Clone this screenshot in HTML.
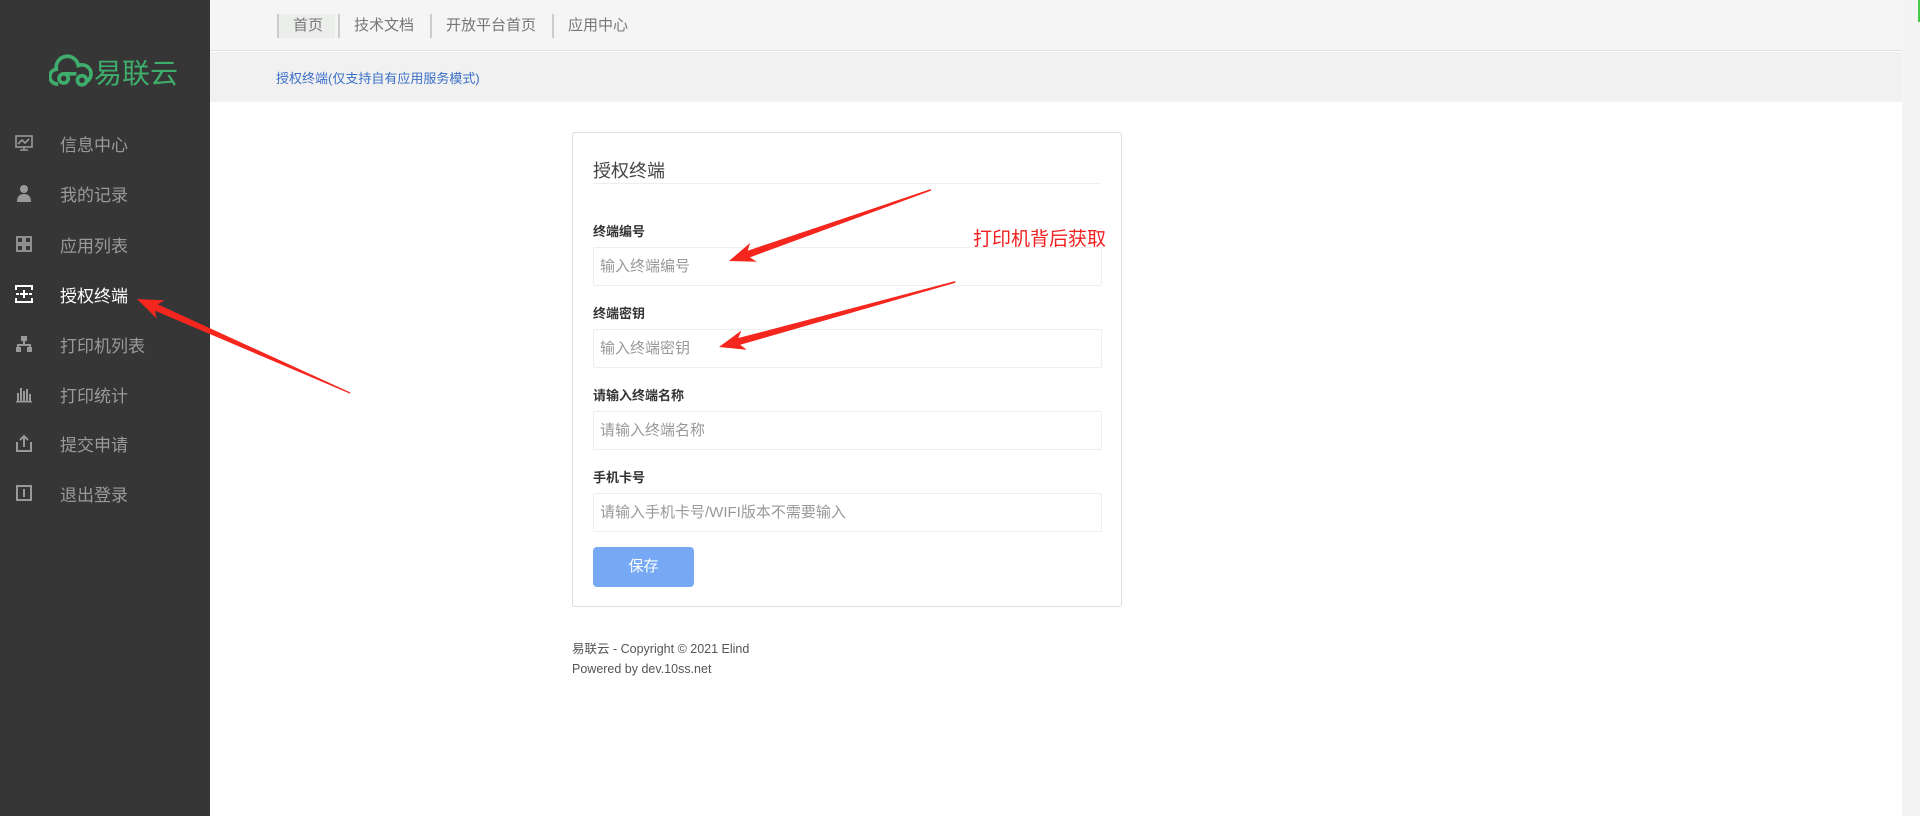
<!DOCTYPE html>
<html><head><meta charset="utf-8"><style>
*{margin:0;padding:0;box-sizing:border-box}
body{width:1920px;height:816px;overflow:hidden;background:#fff;font-family:"Liberation Sans","Noto Sans CJK SC",sans-serif;position:relative}
.side{position:absolute;left:0;top:0;width:210px;height:816px;background:#363636}
.logo{position:absolute;left:49px;top:52px;color:#3fae6c;font-size:28px;display:flex;align-items:center;gap:1px}
.mi{position:absolute;left:0;width:210px;height:40px;display:flex;align-items:center;color:#9a9a9a;font-size:17px}
.mi svg{position:absolute;left:15px;width:18px;height:18px}
.mi span{position:absolute;left:60px}
.mi.act{color:#fff}
.top{position:absolute;left:210px;top:0;right:18px;height:51px;background:#f4f5f4;border-bottom:1px solid #e2e3e2}
.nav{position:absolute;top:14px;height:24px;font-size:15px;color:#777;border-left:2px solid #ccc;padding-left:14px;line-height:24px}
.crumb{position:absolute;left:210px;top:52px;right:18px;height:50px;background:#f0f1f0}
.crumb span{position:absolute;left:66px;top:16px;font-size:13px;color:#3c6fc7}
.card{position:absolute;left:572px;top:132px;width:550px;height:475px;border:1px solid #ddd;border-radius:3px;background:#fff}
.ttl{position:absolute;left:20px;top:24px;font-size:18px;color:#444}
.hr{position:absolute;left:20px;right:20px;top:50px;border-top:1px solid #eee}
.lb{position:absolute;left:20px;font-size:13px;font-weight:bold;color:#333}
.in{position:absolute;left:20px;width:509px;height:39px;border:1px solid #eee;border-radius:2px;font-size:15px;color:#999;padding-left:6px;line-height:37px}
.btn{position:absolute;left:20px;top:414px;width:101px;height:40px;background:#77a8f4;border-radius:4px;color:#fff;font-size:15px;text-align:center;line-height:40px}
.foot{position:absolute;left:572px;top:639px;font-size:12.5px;color:#555;line-height:20px}
.scroll{position:absolute;right:0;top:0;width:18px;height:816px;background:#f4f4f4}
</style></head><body>
<div class="side">
 <div class="logo"><svg width="44" height="36" viewBox="0 0 48 38" fill="none" stroke="#3fae6c" stroke-width="4"><path d="M10 32 A8 8 0 0 1 8 16 A12 12 0 0 1 32 12 A9 9 0 0 1 40 30"/><circle cx="16" cy="26" r="5"/><circle cx="36" cy="28" r="5"/><path d="M16 21 L30 21"/></svg><span>易联云</span></div>
 <div class="mi" style="top:123px"><svg viewBox="0 0 18 18" fill="none" stroke="#999" stroke-width="1.6"><rect x="1" y="2" width="16" height="11"/><path d="M3 10l4-4 3 3 4-4M9 13v3M5 16h8"/></svg><span>信息中心</span></div>
 <div class="mi" style="top:173px"><svg viewBox="0 0 18 18" fill="#999"><circle cx="9" cy="5" r="4"/><path d="M2 18c0-6 3-8 7-8s7 2 7 8z"/></svg><span>我的记录</span></div>
 <div class="mi" style="top:224px"><svg viewBox="0 0 18 18" fill="none" stroke="#999" stroke-width="1.8"><rect x="2" y="2" width="6" height="6"/><rect x="10" y="2" width="6" height="6"/><rect x="2" y="10" width="6" height="6"/><rect x="10" y="10" width="6" height="6"/></svg><span>应用列表</span></div>
 <div class="mi act" style="top:274px"><svg viewBox="0 0 18 18" fill="none" stroke="#fff" stroke-width="2"><path d="M1 5V1h16v4M1 13v4h16v-4M1 9h3M14 9h3M9 5v8M5 9h8"/></svg><span>授权终端</span></div>
 <div class="mi" style="top:324px"><svg viewBox="0 0 18 18" fill="#999"><rect x="6" y="1" width="6" height="5"/><rect x="1" y="12" width="5" height="5"/><rect x="12" y="12" width="5" height="5"/><path d="M8 6h2v3h6v3h-2v-1H4v1H2V9h6z"/></svg><span>打印机列表</span></div>
 <div class="mi" style="top:374px"><svg viewBox="0 0 18 18" fill="#999"><rect x="2" y="8" width="2" height="8"/><rect x="5" y="3" width="2" height="13"/><rect x="8" y="6" width="2" height="10"/><rect x="11" y="4" width="2" height="12"/><rect x="14" y="9" width="2" height="7"/><rect x="1" y="16" width="16" height="1.5"/></svg><span>打印统计</span></div>
 <div class="mi" style="top:423px"><svg viewBox="0 0 18 18" fill="none" stroke="#999" stroke-width="2"><path d="M2 8v9h14V8M9 13V2M5 6l4-4 4 4"/></svg><span>提交申请</span></div>
 <div class="mi" style="top:473px"><svg viewBox="0 0 18 18" fill="none" stroke="#999" stroke-width="2"><rect x="2" y="2" width="14" height="14"/><path d="M9 5v8"/></svg><span>退出登录</span></div>
</div>
<div class="top">
 <div class="nav" style="left:67px;background:#eceeec;width:58px">首页</div>
 <div class="nav" style="left:128px">技术文档</div>
 <div class="nav" style="left:220px">开放平台首页</div>
 <div class="nav" style="left:342px">应用中心</div>
</div>
<div class="crumb"><span>授权终端(仅支持自有应用服务模式)</span></div>
<div class="card">
 <div class="ttl">授权终端</div><div class="hr"></div>
 <div class="lb" style="top:88px">终端编号</div><div class="in" style="top:114px">输入终端编号</div>
 <div class="lb" style="top:170px">终端密钥</div><div class="in" style="top:196px">输入终端密钥</div>
 <div class="lb" style="top:252px">请输入终端名称</div><div class="in" style="top:278px">请输入终端名称</div>
 <div class="lb" style="top:334px">手机卡号</div><div class="in" style="top:360px">请输入手机卡号/WIFI版本不需要输入</div>
 <div class="btn">保存</div>
</div>
<div class="foot">易联云 - Copyright © 2021 Elind<br>Powered by dev.10ss.net</div>
<div style="position:absolute;left:973px;top:224px;font-size:19px;color:#f02020">打印机背后获取</div>
<svg style="position:absolute;left:0;top:0" width="1920" height="816">
<g fill="#f5261e">
<polygon transform="translate(137,299) rotate(23.8)" points="0,0 26,-10 21,-3.5 233,-0.6 233,0.6 21,3.5 26,10"/>
<polygon transform="translate(729,261) rotate(-19.4)" points="0,0 26,-10 21,-3.5 214,-0.8 214,0.8 21,3.5 26,10"/>
<polygon transform="translate(719,347) rotate(-15.4)" points="0,0 26,-10 21,-3.5 245,-0.8 245,0.8 21,3.5 26,10"/>
</g></svg>
<div class="scroll"><div style="position:absolute;left:16px;top:0;width:2px;height:22px;background:#4c4"></div></div>
</body></html>
